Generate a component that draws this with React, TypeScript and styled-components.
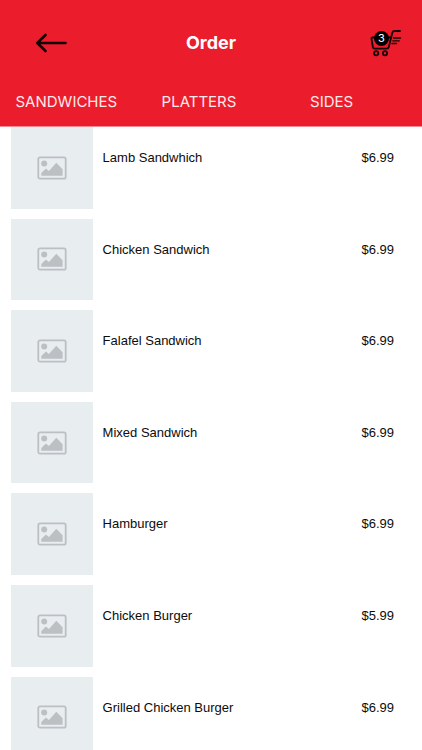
import React from "react";
import styled, { createGlobalStyle } from "styled-components";

const GlobalStyle = createGlobalStyle`
  * { box-sizing: border-box; }
  body {
    margin: 0;
    background: #fff;
    color: #0c0c0c;
    font-family: "Liberation Sans", Arial, sans-serif;
  }
  html, body, #root { height: 100%; }
`;

const Screen = styled.div`
  display: flex;
  flex-direction: column;
  height: 100%;
  overflow: hidden;
`;

const Header = styled.header`
  flex: none;
  background: #eb1c2b;
  color: #fff;
  font-family: Inter, sans-serif;
  border-bottom: 1px solid #f38a90;
`;

const TitleBar = styled.div`
  display: grid;
  grid-template-columns: 1fr auto 1fr;
  align-items: center;
  padding: 22px 20px 0 30px;
  height: 64px;
`;

const Title = styled.h1`
  margin: 0;
  font-size: 18px;
  line-height: 24px;
  font-weight: 700;
  padding-right: 10px;
`;

const IconButton = styled.button<{ $end?: boolean }>`
  position: relative;
  display: flex;
  justify-self: ${(p) => (p.$end ? "end" : "start")};
  padding: 0;
  border: 0;
  background: none;
  color: #120405;
  cursor: pointer;
`;

const Badge = styled.span`
  position: absolute;
  left: 4px;
  top: 2px;
  width: 15px;
  height: 15px;
  border-radius: 50%;
  background: #000;
  color: #fff;
  font-family: Inter, sans-serif;
  font-size: 11px;
  line-height: 15px;
  text-align: center;
`;

const Tabs = styled.nav`
  display: grid;
  grid-template-columns: repeat(3, 1fr);
  padding: 14px 24px 0 0;
`;

const Tab = styled.a`
  height: 48px;
  font-size: 15px;
  line-height: 48px;
  text-align: center;
  text-decoration: none;
  color: #ffe9eb;
`;

const Menu = styled.ul`
  flex: 1;
  min-height: 0;
  overflow: hidden;
  display: flex;
  flex-direction: column;
  gap: 10px;
  margin: 0;
  padding: 0 3px 0 11px;
  list-style: none;
`;

const Item = styled.li`
  flex: none;
  display: flex;
  align-items: flex-start;
  font-size: 13px;
  line-height: 16px;
`;

const Thumb = styled.div`
  flex: none;
  width: 20%;
  aspect-ratio: 1;
  display: flex;
  align-items: center;
  justify-content: center;
  background: #e8edf0;
`;

const Name = styled.span`
  flex: 1;
  padding: 23px 10px 0;
`;

const Price = styled.span`
  padding: 23px 25px 0 0;
`;

const BackArrow = () => (
  <svg width="42" height="24" viewBox="0 0 42 24" fill="none" stroke="currentColor" strokeWidth="2.6" strokeLinecap="round" strokeLinejoin="round" aria-hidden="true">
    <path d="M35.5 12H7.5M15.5 4L7.3 12l8.2 8" />
  </svg>
);

const Cart = () => (
  <svg width="32" height="28" viewBox="0 0 32 28" fill="none" stroke="currentColor" strokeWidth="1.8" strokeLinecap="round" strokeLinejoin="round" aria-hidden="true">
    <path d="M30 2h-5.5c-1.2 0-1.8.6-2.2 1.8L18.8 18c-.3 1.2-.9 1.7-2 1.7H4.6c-1 0-1.6-.5-1.7-1.5L1.5 9.8c-.1-.8.3-1.3 1-1.3H20" />
    <path d="M23.5 9h7M22.8 11.8h6.5M22 14.5h4.5" strokeWidth="1.3" />
    <circle cx="6.2" cy="24.3" r="2.1" />
    <circle cx="15" cy="24.3" r="2.1" />
  </svg>
);

const PicturePlaceholder = () => (
  <svg width="30" height="24" viewBox="0 0 30 24" aria-hidden="true">
    <rect x="1.3" y="1.3" width="27.4" height="21.4" rx="1.8" fill="none" stroke="#bcc0c3" strokeWidth="1.8" />
    <circle cx="7.2" cy="7.4" r="3" fill="#bcc0c3" />
    <path d="M4.3 19.8v-2.9l4.6-4.5 3 2.6 7.4-8.2 6.3 6.4v6.6z" fill="#bcc0c3" />
  </svg>
);

const tabs = ["SANDWICHES", "PLATTERS", "SIDES"];

const items = [
  { name: "Lamb Sandwhich", price: "$6.99" },
  { name: "Chicken Sandwich", price: "$6.99" },
  { name: "Falafel Sandwich", price: "$6.99" },
  { name: "Mixed Sandwich", price: "$6.99" },
  { name: "Hamburger", price: "$6.99" },
  { name: "Chicken Burger", price: "$5.99" },
  { name: "Grilled Chicken Burger", price: "$6.99" },
];

export default function App() {
  return (
    <Screen>
      <GlobalStyle />
      <Header>
        <TitleBar>
          <IconButton type="button" aria-label="Back">
            <BackArrow />
          </IconButton>
          <Title>Order</Title>
          <IconButton type="button" aria-label="Cart, 3 items" $end>
            <Cart />
            <Badge>3</Badge>
          </IconButton>
        </TitleBar>
        <Tabs aria-label="Menu sections">
          {tabs.map((tab) => (
            <Tab key={tab} href={`#${tab.toLowerCase()}`}>
              {tab}
            </Tab>
          ))}
        </Tabs>
      </Header>
      <Menu>
        {items.map((item) => (
          <Item key={item.name}>
            <Thumb>
              <PicturePlaceholder />
            </Thumb>
            <Name>{item.name}</Name>
            <Price>{item.price}</Price>
          </Item>
        ))}
      </Menu>
    </Screen>
  );
}
